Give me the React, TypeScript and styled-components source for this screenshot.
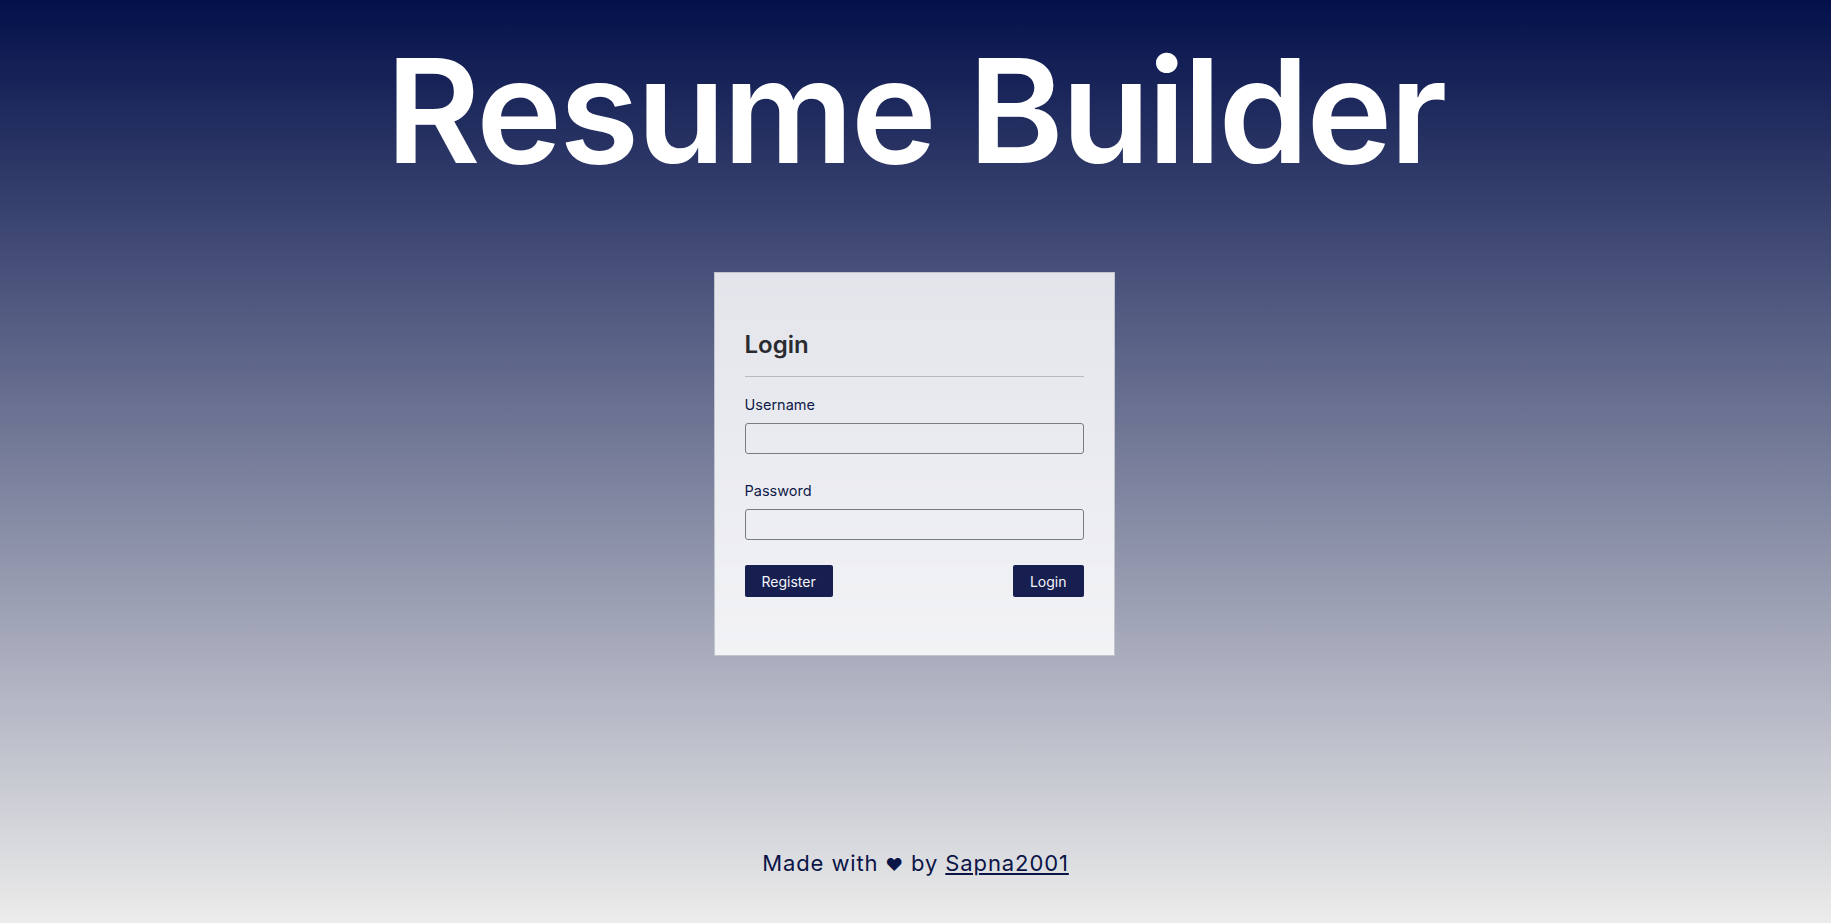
import React from "react";
import styled, { createGlobalStyle } from "styled-components";

const GlobalStyle = createGlobalStyle`
  html, body { margin: 0; padding: 0; }
  body {
    font-family: Inter, "Noto Sans", "DejaVu Sans", sans-serif;
    background: linear-gradient(to bottom, #03104a 0%, #ececeb 100%);
    min-height: 100vh;
  }
  * { box-sizing: border-box; }
`;

const Page = styled.div`
  min-height: 100vh;
  display: flex;
  flex-direction: column;
  align-items: center;
`;

const Title = styled.h1`
  margin: 38px 0 0;
  font-size: 145px;
  line-height: 145px;
  font-weight: 600;
  color: #ffffff;
  letter-spacing: -2.5px;
  white-space: nowrap;
`;

const Card = styled.form`
  margin-top: 89px;
  margin-right: 3px;
  width: 401px;
  padding: 57px 30px 58px;
  background: rgba(255, 255, 255, 0.85);
  border: 1px solid rgba(190, 192, 202, 0.9);
  display: flex;
  flex-direction: column;
`;

const Heading = styled.h2`
  margin: 0;
  font-size: 24px;
  line-height: 29px;
  font-weight: 600;
  color: #2a2b2f;
  padding-bottom: 17px;
  border-bottom: 1px solid #b9babd;
`;

const Field = styled.div<{ $top: number }>`
  display: flex;
  flex-direction: column;
  margin-top: ${(p) => p.$top}px;
`;

const Label = styled.label`
  font-size: 14.5px;
  line-height: 17px;
  color: #101a4a;
  margin-bottom: 10px;
`;

const Input = styled.input`
  height: 31px;
  width: 100%;
  border: 1px solid #7a7b80;
  border-radius: 3px;
  background: transparent;
  padding: 0 8px;
  font: inherit;
`;

const Actions = styled.div`
  margin-top: 25px;
  display: flex;
  justify-content: space-between;
`;

const Button = styled.button`
  height: 32px;
  padding: 0 17px;
  background: #161f50;
  color: #f4f5fa;
  border: none;
  border-radius: 2px;
  font-family: inherit;
  font-size: 14px;
  cursor: pointer;
`;

const Footer = styled.footer`
  margin-top: auto;
  padding-bottom: 45px;
  font-size: 22px;
  line-height: 25px;
  letter-spacing: 0.9px;
  color: #0b1447;
`;

const Heart = styled.span`
  font-size: 17px;
`;

const Link = styled.a`
  color: #0b1447;
  text-decoration: underline;
`;

export default function App() {
  return (
    <>
      <GlobalStyle />
      <Page>
        <Title>Resume Builder</Title>
        <Card onSubmit={(e) => e.preventDefault()}>
          <Heading>Login</Heading>
          <Field $top={19}>
            <Label htmlFor="username">Username</Label>
            <Input id="username" type="text" />
          </Field>
          <Field $top={28}>
            <Label htmlFor="password">Password</Label>
            <Input id="password" type="password" />
          </Field>
          <Actions>
            <Button type="button">Register</Button>
            <Button type="submit">Login</Button>
          </Actions>
        </Card>
        <Footer>
          Made with <Heart>♥</Heart> by <Link href="#">Sapna2001</Link>
        </Footer>
      </Page>
    </>
  );
}
